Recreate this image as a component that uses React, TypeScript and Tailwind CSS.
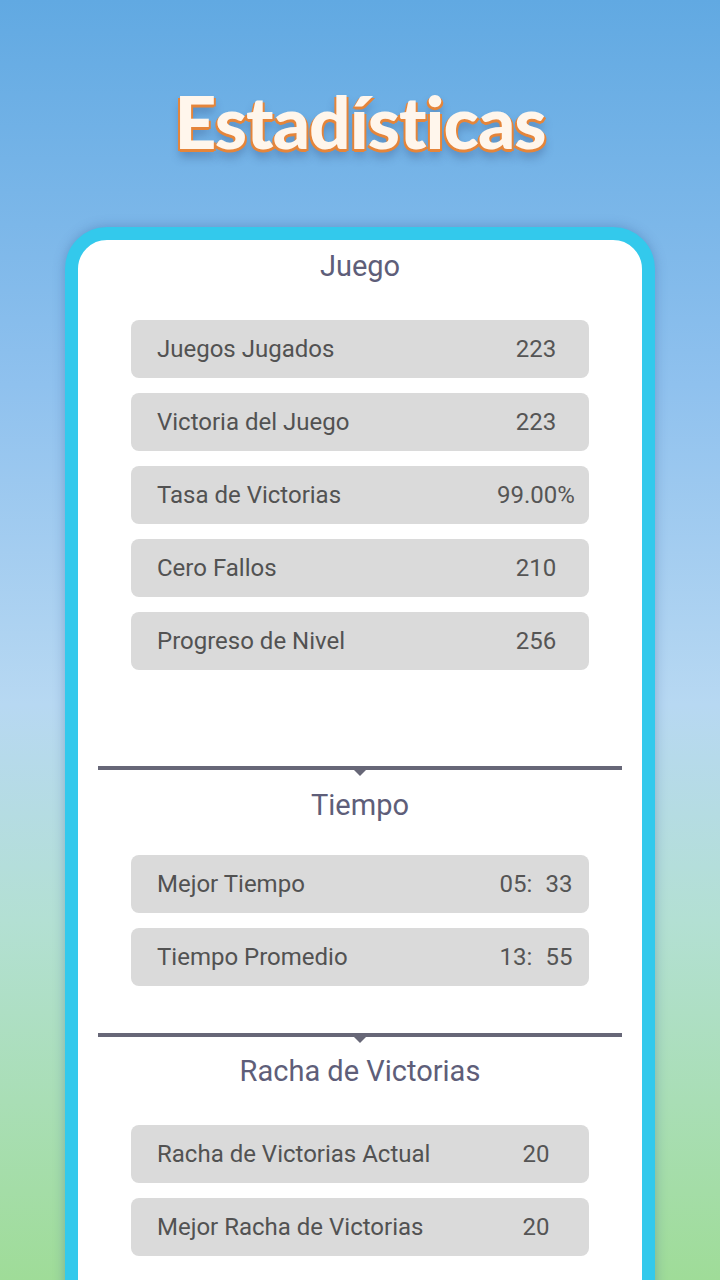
import React from "react";

type Row = { label: string; value: React.ReactNode };

const juego: Row[] = [
  { label: "Juegos Jugados", value: "223" },
  { label: "Victoria del Juego", value: "223" },
  { label: "Tasa de Victorias", value: "99.00%" },
  { label: "Cero Fallos", value: "210" },
  { label: "Progreso de Nivel", value: "256" },
];

const tiempo: Row[] = [
  { label: "Mejor Tiempo", value: <>05:<span className="ml-[13px]">33</span></> },
  { label: "Tiempo Promedio", value: <>13:<span className="ml-[13px]">55</span></> },
];

const racha: Row[] = [
  { label: "Racha de Victorias Actual", value: "20" },
  { label: "Mejor Racha de Victorias", value: "20" },
];

function StatRows({ rows }: { rows: Row[] }) {
  return (
    <div className="flex flex-col gap-[15px] px-[53px]">
      {rows.map((r) => (
        <div key={r.label} className="flex h-[58px] items-center justify-between rounded-[8px] bg-[#dadada] pl-[26px] pr-[3px]">
          <span className="text-[24px] text-[#525252]">{r.label}</span>
          <span className="w-[100px] whitespace-nowrap text-center text-[24px] text-[#555555]">{r.value}</span>
        </div>
      ))}
    </div>
  );
}

function SectionTitle({ children }: { children: React.ReactNode }) {
  return <h2 className="text-center text-[29px] leading-[32px] text-[#5e5e79]">{children}</h2>;
}

function Divider() {
  return (
    <div className="relative mx-[20px] h-[4px] bg-[#676777]">
      <div className="absolute left-1/2 top-[3px] h-0 w-0 -translate-x-1/2 border-x-[7px] border-t-[7px] border-x-transparent border-t-[#676777]" />
    </div>
  );
}

export default function App() {
  return (
    <div
      className="h-[1280px] w-[720px] overflow-hidden bg-[linear-gradient(180deg,#61a9e2_0%,#8fc1ee_30%,#b7d8f2_55%,#b3e0d3_72%,#9fdc98_100%)]"
      style={{ fontFamily: "Roboto, 'Liberation Sans', sans-serif" }}
    >
      {/* header */}
      <div className="flex h-[227px] justify-center pt-[85px]">
        <h1
          className="text-[73px] font-black leading-none tracking-[-1px] text-[#fff6ec] [text-shadow:0_3px_0_#e5853a,2px_2px_0_#e5853a,-2px_2px_0_#e5853a,0_8px_10px_rgba(40,60,110,0.35)]"
          style={{ fontFamily: "Lato, 'Open Sans', sans-serif" }}
        >
          Estadísticas
        </h1>
      </div>

      {/* card */}
      <div className="mx-[65px] h-[1120px] rounded-[42px] border-[13px] border-[#33c9ec] bg-white shadow-[0_0_12px_rgba(40,80,140,0.35)]">
        <div className="pt-[10px]">
          <SectionTitle>Juego</SectionTitle>
          <div className="mt-[38px]">
            <StatRows rows={juego} />
          </div>
          <div className="mt-[96px]">
            <Divider />
          </div>
          <div className="mt-[19px]">
            <SectionTitle>Tiempo</SectionTitle>
          </div>
          <div className="mt-[34px]">
            <StatRows rows={tiempo} />
          </div>
          <div className="mt-[47px]">
            <Divider />
          </div>
          <div className="mt-[18px]">
            <SectionTitle>Racha de Victorias</SectionTitle>
          </div>
          <div className="mt-[38px]">
            <StatRows rows={racha} />
          </div>
        </div>
      </div>
    </div>
  );
}
